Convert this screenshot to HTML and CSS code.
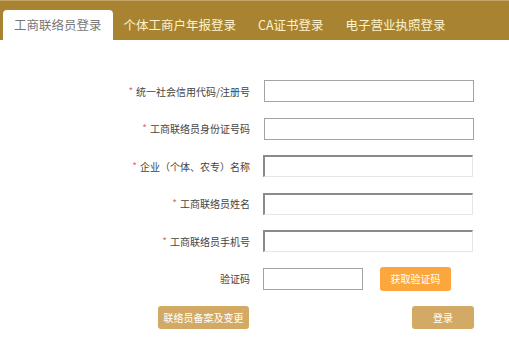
FILE: index.html
```html
<!DOCTYPE html>
<html lang="zh-CN">
<head>
    <meta charset="UTF-8">
    <title>工商联络员登录</title>
    <link rel="stylesheet" href="styles.css">
</head>
<body>
    <div class="tabs">
        <div class="tab active">工商联络员登录</div>
        <div class="tab">个体工商户年报登录</div>
        <div class="tab">CA证书登录</div>
        <div class="tab">电子营业执照登录</div>
    </div>

    <form class="login-form">
        <div class="form-row">
            <label><span class="req">*</span>统一社会信用代码/注册号</label>
            <input type="text" class="box box-flat">
        </div>
        <div class="form-row">
            <label><span class="req">*</span>工商联络员身份证号码</label>
            <input type="text" class="box box-flat">
        </div>
        <div class="form-row">
            <label><span class="req">*</span>企业（个体、农专）名称</label>
            <input type="text" class="box box-inset">
        </div>
        <div class="form-row">
            <label><span class="req">*</span>工商联络员姓名</label>
            <input type="text" class="box box-inset">
        </div>
        <div class="form-row">
            <label><span class="req">*</span>工商联络员手机号</label>
            <input type="text" class="box box-inset">
        </div>
        <div class="form-row">
            <label>验证码</label>
            <div class="captcha">
                <input type="text" class="box box-flat captcha-input">
                <button type="button" class="btn btn-orange">获取验证码</button>
            </div>
        </div>
        <div class="actions">
            <button type="button" class="btn btn-tan">联络员备案及变更</button>
            <button type="button" class="btn btn-tan btn-login">登录</button>
        </div>
    </form>
</body>
</html>
```

FILE: styles.css
```css
* {
    margin: 0;
    padding: 0;
    box-sizing: border-box;
    font-family: "Noto Sans CJK SC", "Liberation Sans", sans-serif;
}
body {
    background: white;
    width: 509px;
}
.tabs {
    display: flex;
    align-items: flex-end;
    height: 40px;
    padding-left: 3px;
    background: #a88432;
    border-top: 1px solid #c4a468;
}
.tab {
    height: 30px;
    line-height: 30px;
    padding: 0 11px;
    font-size: 12.5px;
    color: #fdf2cc;
    white-space: nowrap;
}
.tab.active {
    background: white;
    color: #777;
    border-radius: 4px 4px 0 0;
}
.login-form {
    display: flex;
    flex-direction: column;
    gap: 15.5px;
    padding: 40px 0 0 100px;
}
.form-row {
    display: flex;
    align-items: center;
    height: 22px;
}
.form-row label {
    width: 150px;
    margin-right: 13px;
    text-align: right;
    font-size: 10px;
    color: #444;
    white-space: nowrap;
}
.req {
    color: #e06a6a;
    margin-right: 3px;
    position: relative;
    top: -1px;
}
.box {
    width: 210px;
    height: 22px;
    background: white;
    outline: none;
}
.box-flat {
    border: 1px solid #a3a3a3;
    margin-left: 1px;
}
.box-inset {
    border-top: 2px solid #8a8a8a;
    border-left: 2px solid #8a8a8a;
    border-right: 1px solid #e6e6e6;
    border-bottom: 1px solid #e6e6e6;
}
.captcha {
    display: flex;
    align-items: center;
}
.captcha-input {
    width: 100px;
    margin-left: 0;
}
.btn {
    border: none;
    border-radius: 3px;
    color: white;
    font-size: 10px;
    cursor: pointer;
}
.btn-orange {
    background: #fba73c;
    width: 71px;
    height: 24px;
    margin-left: 17px;
}
.btn-tan {
    background: #d3aa65;
    width: 91px;
    height: 23px;
}
.btn-login {
    width: 62px;
}
.actions {
    display: flex;
    justify-content: space-between;
    width: 374px;
    padding-left: 58px;
    margin-top: 0.5px;
}
```
